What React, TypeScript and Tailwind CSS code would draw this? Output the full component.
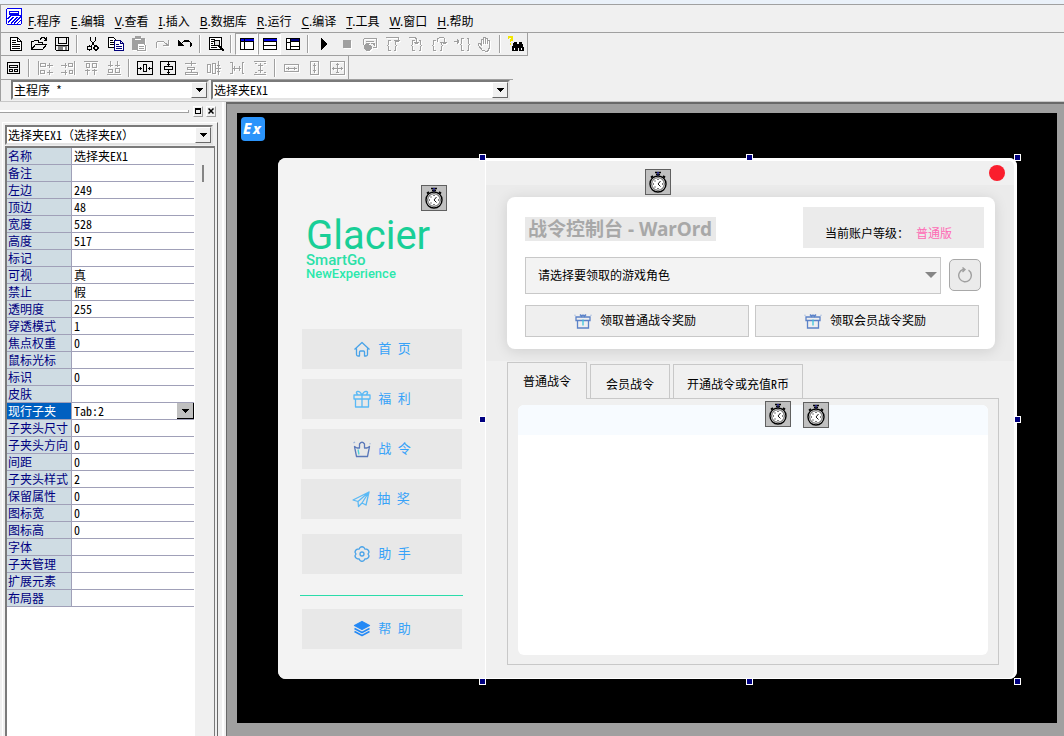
import type { ReactNode } from "react";

const GREY = "#a0a0a0";

function Icon({ children, color = "#000", off = false }: { children: ReactNode; color?: string; off?: boolean }) {
  return (
    <svg
      viewBox="0 0 16 16"
      fill="none"
      stroke={off ? GREY : color}
      shapeRendering="crispEdges"
      className={off ? "h-4 w-4 drop-shadow-[1px_1px_0_#fff]" : "h-4 w-4"}
      aria-hidden="true"
    >
      {children}
    </svg>
  );
}

function Tool({ label, pressed = false, children }: { label: string; pressed?: boolean; children: ReactNode }) {
  return (
    <button
      type="button"
      aria-label={label}
      className={
        pressed
          ? "flex h-[22px] w-[23px] items-center justify-center border border-t-[#a0a0a0] border-l-[#a0a0a0] border-r-white border-b-white bg-[#f8f8f8]"
          : "flex h-[22px] w-[23px] items-center justify-center"
      }
    >
      {children}
    </button>
  );
}

function Sep() {
  return (
    <span className="flex h-[18px] w-2 justify-center">
      <span className="w-px bg-[#a0a0a0]" />
      <span className="w-px bg-white" />
    </span>
  );
}

function Drop() {
  return (
    <span className="pointer-events-none absolute top-[2px] right-[2px] bottom-[2px] flex w-4 items-center justify-center border border-t-white border-l-white border-r-[#696969] border-b-[#696969] bg-[#f0f0f0]">
      <svg viewBox="0 0 7 4" className="h-1 w-[7px]" shapeRendering="crispEdges" aria-hidden="true">
        <path d="M0 0h7v1H6v1H5v1H4v1H3V3H2V2H1V1H0z" fill="#000" />
      </svg>
    </span>
  );
}

function Combo({ label, value, width }: { label: string; value: string; width: string }) {
  return (
    <span className={`relative block h-5 ${width}`}>
      <select
        aria-label={label}
        className="block h-full w-full appearance-none border-2 border-t-[#7a7a7a] border-l-[#7a7a7a] border-r-[#e3e3e3] border-b-[#e3e3e3] bg-white pl-px text-[12px] leading-4 text-black outline-none"
      >
        <option>{value}</option>
      </select>
      <Drop />
    </span>
  );
}

function Timer({ place }: { place: string }) {
  return (
    <span className={`absolute z-10 flex h-[26px] w-[26px] items-center justify-center border border-[#606060] bg-[#c0c0c0] ${place}`}>
      <svg viewBox="0 0 20 22" className="h-[22px] w-5" aria-hidden="true">
        <path d="M7 1.5h6M8 3.5h4" stroke="#000" strokeWidth="1.6" />
        <path d="M9 1.5h2M10 2v4" stroke="#23238c" strokeWidth="1" />
        <path d="M3 6.5l2-1.5M17 6.5L15 5" stroke="#000" strokeWidth="2" />
        <circle cx="10" cy="13" r="8" fill="#fff" stroke="#000" strokeWidth="1.4" />
        <circle cx="10" cy="13" r="6.3" fill="#fff" stroke="#000" strokeWidth=".7" />
        <path d="M12.500 10L10 13l2.500 2.500" fill="none" stroke="#000" strokeWidth=".9" />
        <path d="M10 8v1M10 17v1M5 13h1M14 13h1M6.5 10h1M6.5 16h1" stroke="#000" strokeWidth="1" />
      </svg>
    </span>
  );
}

const menus = [
  ["F", "程序"], ["E", "编辑"], ["V", "查看"], ["I", "插入"], ["B", "数据库"],
  ["R", "运行"], ["C", "编译"], ["T", "工具"], ["W", "窗口"], ["H", "帮助"],
];

const properties = [
  ["名称", "选择夹EX1"], ["备注", ""], ["左边", "249"], ["顶边", "48"], ["宽度", "528"], ["高度", "517"],
  ["标记", ""], ["可视", "真"], ["禁止", "假"], ["透明度", "255"], ["穿透模式", "1"], ["焦点权重", "0"],
  ["鼠标光标", ""], ["标识", "0"], ["皮肤", ""], ["现行子夹", "Tab:2"], ["子夹头尺寸", "0"],
  ["子夹头方向", "0"], ["间距", "0"], ["子夹头样式", "2"], ["保留属性", "0"], ["图标宽", "0"],
  ["图标高", "0"], ["字体", ""], ["子夹管理", ""], ["扩展元素", ""], ["布局器", ""],
];

const handles = [
  "-top-1 -left-[7px]", "-top-1 left-1/2 -ml-[6px]", "-top-1 -right-1",
  "top-1/2 -left-[7px] -mt-[3px]", "top-1/2 -right-1 -mt-[3px]",
  "-bottom-[6px] -left-[7px]", "-bottom-[6px] left-1/2 -ml-[6px]", "-bottom-[6px] -right-1",
];

function MenuBar() {
  return (
    <nav className="flex h-[29px] items-center border-t border-b border-[#a0a0a0] border-l border-l-[#a0a0a0] pl-[5px] font-['Noto_Sans','Noto_Sans_CJK_SC',sans-serif]">
      <svg viewBox="0 0 17 17" className="mb-1 h-[17px] w-[17px]" fill="none" stroke="#0000f0" shapeRendering="crispEdges" aria-hidden="true">
        <path d="M1 1h14v1h1v14H1z" fill="#fff" stroke="none" />
        <path d="M.5 15.500V1.500l1-1h14v15l-1 1h-13z" />
        <path d="M3.500 3.500h9v3h-9zM3.500 5h9" />
        <path d="M1 11l4-3.500h10v1.500L8 15.500M2 14.500l6.500-6M5 16l6.500-7M11 16l4-4" strokeWidth="1.300" />
      </svg>
      <ul className="flex gap-[10px] pt-[7px] pl-[5px] text-[12px] leading-4 text-black">
        {menus.map(([key, text]) => (
          <li key={key}>
            <button type="button" className="whitespace-nowrap"><span className="underline underline-offset-2">{key}</span>.{text}</button>
          </li>
        ))}
      </ul>
    </nav>
  );
}

function StandardBar() {
  return (
    <div className="flex h-[23px] w-max items-center border-r border-b border-l border-[#a0a0a0] pl-[3px]">
      <Tool label="新建"><Icon><path d="M2.500 1.500h7l4 4v9h-11zM9.500 1.500v4h4" fill="#fff" /><path d="M4 4.500h4M4 6.500h4M4 8.500h8M4 10.500h8M4 12.500h8" /></Icon></Tool>
      <Tool label="打开"><Icon><path d="M.5 13.500v-8h2l1-1h4v2h4v2M.5 13.500l4-5h11l-4 5zM9 3.500l2-2h2l2 2M15.500 1v4M12.500 4.500h3" /></Icon></Tool>
      <Tool label="保存"><Icon><path d="M1.500 1.500h13v13h-12l-1-1zM4.500 1.500v6h8v-6" fill="#f0f0f0" /><path d="M4 9h9v5H4z" fill="#808080" stroke="none" /><path d="M9 11h2v3H9z" fill="#fff" stroke="none" /><path d="M2 9.500h12" /></Icon></Tool>
      <Sep />
      <Tool label="剪切"><Icon><path d="M5.500 1v3l5 7M10.500 1v3l-5 7" /><circle cx="4.500" cy="12" r="2" strokeWidth="1.200" /><circle cx="11" cy="12" r="2" strokeWidth="1.200" /></Icon></Tool>
      <Tool label="复制"><Icon><path d="M.5 1.500h5l3 3v7h-8z" fill="#fff" /><path d="M2 4.500h3M2 6.500h5M2 8.500h5" /><path d="M6.500 4.500h6l3 3v7h-9zM12.500 4.500v3h3M8 8.500h3M8 10.500h6M8 12.500h6" fill="#fff" stroke="#00007a" /></Icon></Tool>
      <Tool label="粘贴"><Icon off><path d="M1 2h12v11H1zM4 0h5v3H4z" fill={GREY} /><path d="M4 3.500h6" stroke="#fff" /><path d="M6.500 7.500h6l2 2v5h-8z" fill="#fff" /><path d="M8 10.500h5M8 12.500h5" /></Icon></Tool>
      <Tool label="重做"><Icon off><path d="M3 11.500l-1-1.500V7l2-2h5l4 3.500" /><path d="M14.500 4v5.500H9M12 9h3M13 8h2" /></Icon></Tool>
      <Tool label="撤销"><Icon><path d="M12.500 11.500l1.500-1.500V7l-2-2H7L3.500 8.500" strokeWidth="1.200" /><path d="M1.500 4.500v5h5zM2 7l3 3" fill="#000" /></Icon></Tool>
      <Sep />
      <Tool label="查找"><Icon><path d="M1.500 1.500h12v12h-12z" fill="#fff" /><path d="M3 3.500h4M3 5.500h3M3 7.500h2M3 9.500h3M3 11.500h6" /><circle cx="9" cy="7" r="3" fill="#ddd" /><path d="M11 9l4 5M11 10l4 5" strokeWidth="1.500" /></Icon></Tool>
      <Sep />
      <Tool label="工作夹" pressed><Icon><path d="M1.500 2.500h13v11h-13z" fill="#fff" /><path d="M2 4h13" stroke="#0000e0" strokeWidth="2" /><path d="M1.500 5.500h13M5.500 2v12" /></Icon></Tool>
      <Tool label="输出夹" pressed><Icon><path d="M1.500 2.500h13v11h-13z" fill="#fff" /><path d="M2 4h13" stroke="#0000e0" strokeWidth="2" /><path d="M1.500 5.500h13M1.500 9.500h13" /></Icon></Tool>
      <Tool label="属性夹"><Icon><path d="M1.500 2.500h13v11h-13z" fill="#fff" /><path d="M6 4h8" stroke="#000080" strokeWidth="1.500" /><path d="M5.500 5.500h9M5.500 2v12M1.500 6.500h4M5.500 10.500h9" /></Icon></Tool>
      <Sep />
      <Tool label="运行"><Icon><path d="M5 2h1v1h1v1h1v1h1v1h1v1h1v2h-1v1H9v1H8v1H7v1H6v1H5z" fill="#000" stroke="none" /></Icon></Tool>
      <Tool label="停止"><Icon off><path d="M4 4h8v8H4z" fill={GREY} stroke="none" /></Icon></Tool>
      <Tool label="查看"><Icon off><path d="M1.500 2.500h13v9h-4M1.500 2.500v6M4 5.500h8M4 7.500h4" /><path d="M2 10l3-2 4 2v3l-3 2-4-3zM9 7h3v3" fill={GREY} /></Icon></Tool>
      <Tool label="单步"><Icon off><path d="M5.500 4.500h-2v4l-1 1 1 1v4h2M8.500 4.500h2v4l1 1-1 1v4h-2M1 1.500h12v4M10 4.500h5M11 5.500h3" /></Icon></Tool>
      <Tool label="进入"><Icon off><path d="M6.500 4.500h-2v4l-1 1 1 1v4h2M10.500 4.500h2v4l1 1-1 1v4h-2M1 1.500h6l1 1v5M6 6.500h5M7 7.500h3" /></Icon></Tool>
      <Tool label="跳出"><Icon off><path d="M4.500 4.500h-2v4l-1 1 1 1v4h2M8.500 6.500h2v2l1 1-1 1v4h-2M6.500 6V3l2-1.500h4l1 1v5M11 6.500h5M12 7.500h3" /></Icon></Tool>
      <Tool label="到光标"><Icon off><path d="M9.500 2.500h-2v5l-1 1 1 1v5h2M12.500 2.500h2v5l1 1-1 1v5h-2M0 5.500h5M3.500 3v5M4.500 4v3" /></Icon></Tool>
      <Tool label="断点"><Icon off><path d="M5.500 14.500l-4-5v-2h2l1 2v-6h2v4-6h2v6-5h2v5-3h2v7l-2 4z" /></Icon></Tool>
      <Sep />
      <Tool label="搜索帮助"><Icon><path d="M0 2.500V1h4v3H2.500v2M2.500 7v2" stroke="#f2e600" strokeWidth="1.600" /><path d="M6 6h3v2h2V6h3l2 6v3h-5v-3h-1v3H4v-3z" fill="#000" stroke="none" /><path d="M6 12h1v2H6zM13 12h1v2h-1z" fill="#fff" stroke="none" /></Icon></Tool>
    </div>
  );
}

function AlignBar() {
  return (
    <div className="flex h-6 w-[513px] border-b border-l border-[#a0a0a0]">
      <div className="flex w-max items-center border-r border-[#a0a0a0] pl-px">
        <Tool label="窗体"><Icon><path d="M1.500 2.500h12v11h-12zM3.500 5.500h8v2h-8zM3.500 9.500h3v2h-3zM8.500 9.500h3v2h-3z" strokeWidth="1.300" /></Icon></Tool>
        <Sep />
        <Tool label="左对齐"><Icon off><path d="M1.500 1v14M3.500 3.500h5v3h-5zM3.500 10.500h4v3h-4zM10 5.500h6M12.500 3v5M10 12.500h6M12.500 10v5" /></Icon></Tool>
        <Tool label="右对齐"><Icon off><path d="M14.500 1v14M8.500 3.500h4v3h-4zM9.500 10.500h3v3h-3zM1 5.500h6M5.500 3v5M1 12.500h6M5.500 10v5" /></Icon></Tool>
        <Tool label="上对齐"><Icon off><path d="M1 1.500h14M3.500 3.500h3v4h-3zM9.500 3.500h4v4h-4zM4.500 9v6M2 10.500h5M11.500 9v6M9 10.500h5" /></Icon></Tool>
        <Tool label="下对齐"><Icon off><path d="M1 14.500h14M2.500 9.500h4v3h-4zM9.500 8.500h4v4h-4zM4.500 1v6M2 5.500h5M11.500 1v6M9 5.500h5" /></Icon></Tool>
        <Sep />
        <Tool label="水平居中"><Icon><path d="M.5 1.500h15v13H.5z" /><path d="M6.500 4.500h3v7h-3zM1 8.500h4M11 8.500h4M3.500 7v3M12.500 7v3" /></Icon></Tool>
        <Tool label="垂直居中"><Icon><path d="M.5 1.500h15v13H.5z" /><path d="M4.500 6.500h8v3h-8zM8.500 2v4M8.500 10v4M7 4.500h3M7 12.500h3" /></Icon></Tool>
        <Tool label="横向居中"><Icon off><path d="M2 3.500h11M4.500 7.500h7v2h-7zM2.500 12.500h12v2h-12zM8.500 1v5M8.500 10v2" /></Icon></Tool>
        <Tool label="纵向居中"><Icon off><path d="M1.500 4.500h3v8h-3zM6.500 3.500h3v10h-3zM12.500 1v14M10 8.500h5M11 5.500h3M11 11.500h3" /></Icon></Tool>
        <Tool label="水平等距"><Icon off><path d="M1 2.500h2v11H1M15 2.500h-2v11h2M4 8.500h8M5.500 6v5M10.500 6v5" /></Icon></Tool>
        <Tool label="垂直等距"><Icon off><path d="M2 1.500h12M2 14.500h12M8.500 3v10M6 5.500h5M6 10.500h5M3 3.500h2M12 3.500h2M3 12.500h2M12 12.500h2" /></Icon></Tool>
        <Sep />
        <Tool label="等宽"><Icon off><path d="M1.500 4.500h14v7h-14zM3 8.500h11M5.500 7v3M11.500 7v3" /></Icon></Tool>
        <Tool label="等高"><Icon off><path d="M4.500 1.500h8v13h-8zM8.500 3v10M7 5.500h3M7 10.500h3" /></Icon></Tool>
        <Tool label="等大小"><Icon off><path d="M1.500 1.500h14v13h-14zM3 8.500h11M8.500 3v10M4.500 7v3M12.500 7v3M7 4.500h3M7 12.500h3" /></Icon></Tool>
      </div>
    </div>
  );
}

function PropertyPanel() {
  return (
    <aside className="flex w-[224px] shrink-0 flex-col border-r-2 border-white">
      <div className="flex h-5 items-center gap-[3px] pb-[2px]">
        <span className="mr-px h-[3px] w-[189px] border-r border-b border-[#a0a0a0] bg-white" />
        <button type="button" aria-label="还原" className="flex h-[11px] w-[10px] items-center justify-center border border-t-white border-l-white border-r-[#a0a0a0] border-b-[#a0a0a0]">
          <svg viewBox="0 0 6 6" className="h-[6px] w-[6px]" shapeRendering="crispEdges" aria-hidden="true"><path d="M0 0h6v6H0zM1 2v3h4V2z" fillRule="evenodd" /></svg>
        </button>
        <button type="button" aria-label="关闭" className="flex h-[11px] w-[10px] items-center justify-center border border-t-white border-l-white border-r-[#a0a0a0] border-b-[#a0a0a0]">
          <svg viewBox="0 0 6 6" className="h-[6px] w-[6px]" aria-hidden="true"><path d="M.5.5l5 5M5.500.5l-5 5" stroke="#000" strokeWidth="1.500" /></svg>
        </button>
      </div>
      <div className="mr-1 ml-[2px] flex flex-1 flex-col border-t border-r border-t-white border-r-[#696969] border-l border-l-white pt-[2px] pl-[2px]">
        <Combo label="对象" value="选择夹EX1（选择夹EX）" width="w-[208px]" />
        <div className="mt-px mr-[2px] flex flex-1 border-t-2 border-r border-l-2 border-[#7a7a7a] bg-white">
          <table className="w-[187px] table-fixed self-start border-separate border-spacing-0 text-left text-[12px] leading-4">
            <colgroup><col className="w-[65px]" /><col /></colgroup>
            <tbody>
              {properties.map(([name, value]) => {
                const active = name === "现行子夹";
                return (
                  <tr key={name} className="h-[17px]">
                    <th
                      scope="row"
                      className={
                        active
                          ? "border-r border-b border-[#a0a0b8] bg-[#0060c0] p-0 pl-px font-normal whitespace-nowrap text-white"
                          : "border-r border-b border-[#a0a0b8] bg-[#cfdce3] p-0 pl-px font-normal whitespace-nowrap text-[#000080]"
                      }
                    >
                      {name}
                    </th>
                    <td className="border-b border-[#a0a0b8] p-0 pl-[2px] text-black">
                      {active ? (
                        <span className="relative block h-4">
                          <select aria-label={name} className="block h-4 w-full appearance-none bg-white text-[12px] leading-4 outline-none">
                            <option>{value}</option>
                          </select>
                          <span className="pointer-events-none absolute top-0 right-0 flex h-4 w-[17px] items-center justify-center border-r border-b border-black bg-[#c0c0c0]">
                            <svg viewBox="0 0 7 4" className="h-1 w-[7px]" shapeRendering="crispEdges" aria-hidden="true"><path d="M0 0h7v1H6v1H5v1H4v1H3V3H2V2H1V1H0z" /></svg>
                          </span>
                        </span>
                      ) : (
                        value
                      )}
                    </td>
                  </tr>
                );
              })}
            </tbody>
          </table>
          <div className="ml-px flex flex-1 items-start justify-center bg-[#f0f0f0] pt-[17px]">
            <span className="mr-[3px] h-[17px] w-[2px] bg-[#858585]" />
          </div>
        </div>
      </div>
    </aside>
  );
}

function NavButton({ text, gap, children }: { text: string; gap: string; children: ReactNode }) {
  return (
    <button type="button" className={`flex h-10 w-40 items-center justify-center gap-[7px] bg-[#e8e8e8] text-[13px] leading-5 text-[#37a2f8] ${gap}`}>
      <svg viewBox="0 0 18 18" className="h-[18px] w-[18px]" fill="none" stroke="#49a3e8" strokeWidth="1.300" strokeLinejoin="round" aria-hidden="true">
        {children}
      </svg>
      <span className="pb-[3px] whitespace-pre">{text}</span>
    </button>
  );
}

function Gift() {
  return (
    <svg viewBox="0 0 18 16" className="h-4 w-[18px]" fill="none" stroke="#5b82c8" strokeWidth="1.300" aria-hidden="true">
      <path d="M2 4h14v3.500H2zM3.500 7.500h11v7.500h-11z" />
      <path d="M8 4L6 1.500M10 4l2-2.500M6.500 3q2.500-1.500 5 0" />
      <path d="M9 6.500v6" stroke="#3cc8dc" />
      <path d="M.5 2l1 .5M17.500 2l-1 .5" stroke="#9ab4dc" />
    </svg>
  );
}

function Sidebar() {
  return (
    <div className="relative flex w-[207px] shrink-0 flex-col rounded-l-lg bg-[#f3f3f3] pb-[30px] pl-6">
      <Timer place="top-[27px] left-[143px]" />
      <header className="h-[171px] pt-[61px] pl-1 font-['Roboto',sans-serif]">
        <h1 className="text-[40px] leading-[34px] text-[#19cf97]">Glacier</h1>
        <p className="text-[15px] leading-[14px] font-medium text-[#2be0a8]">SmartGo</p>
        <p className="text-[13px] leading-[14px] font-medium text-[#2be8ac]">NewExperience</p>
      </header>
      <NavButton text="首 页" gap=""><path d="M1.500 9.500L9 2.500l7.500 7M3.500 8.500v6q0 1.500 1.500 1.500h1.500v-4q0-1 1-1h3q1 0 1 1v4H13q1.500 0 1.500-1.500v-6" /></NavButton>
      <NavButton text="福 利" gap="mt-[10px]"><path d="M1 5h16v4H1zM2.500 9h13v8h-13zM9 5v12M9 5Q7 1 4.500 1.500T5 5M9 5q2-4 4.500-3.500T13 5" stroke="#5ab9f5" /></NavButton>
      <NavButton text="战 令" gap="mt-[10px]"><path d="M1.500 6.500l2 10h11l2-10-2.500 1.500h-2.500V4Q9 .5 6.500 4v4H4z" stroke="#5a78b9" /><path d="M5 9.500l1 5" stroke="#4cd0d8" /><path d="M.5 3l1.500-1M16.500 4l1-.5" stroke="#9ab4dc" /></NavButton>
      <NavButton text="抽 奖" gap="mt-[10px] -ml-px"><path d="M1 10L17 2l-3 13-4-2-3.500 3.500-.5-5zM6 11.500L17 2l-7 11" stroke="#5ab9f5" /></NavButton>
      <NavButton text="助 手" gap="mt-[15px]"><path d="M7 2.500Q9 1 11 2.500l.8 1.500 1.700.2q2.500.8 2.500 3L15 9l1 1.800q0 2.200-2.500 3l-1.700.2-.8 1.500q-2 1.500-4 0L6.200 14l-1.700-.2q-2.500-.8-2.500-3L3 9 2 7.200q0-2.200 2.500-3L6.200 4z" /><circle cx="9" cy="9" r="2" /></NavButton>
      <hr className="mt-[21px] -ml-[2px] w-[163px] border-[#2adcaa]" />
      <NavButton text="帮 助" gap="mt-[13px]"><path d="M9 1.500l7.500 4L9 9.500l-7.500-4z" fill="#2489f5" stroke="#2489f5" /><path d="M1.500 8.500L9 12.500l7.500-4M1.500 11.500L9 15.500l7.500-4" stroke="#2489f5" strokeWidth="1.500" /></NavButton>
    </div>
  );
}

function Console() {
  return (
    <div className="bg-[#ebebeb] px-[21px] pt-3 pr-[19px] pb-3">
      <section className="rounded-lg bg-white pt-[10px] pr-[11px] pb-3 pl-[18px] shadow-[0_2px_14px_rgba(0,0,0,0.12)]">
        <div className="flex items-start justify-between">
          <h2 className="mt-[10px] bg-[#e9e9e9] pr-1 pl-[3px] font-['Noto_Sans','Noto_Sans_CJK_SC',sans-serif] text-[19px] leading-6 font-bold whitespace-nowrap text-[#a8a8a8]">战令控制台 - WarOrd</h2>
          <p className="flex h-[41px] w-[181px] gap-[13px] bg-[#ebebeb] pt-[18px] pl-[22px] text-[12px] leading-4 whitespace-nowrap text-black">
            <span className="w-[78px]">当前账户等级：</span>
            <span className="text-[#ff69b4]">普通版</span>
          </p>
        </div>
        <div className="mt-[9px] flex items-start gap-2 pr-[3px]">
          <span className="relative block h-[37px] flex-1">
            <select aria-label="游戏角色" className="block h-full w-full appearance-none border border-[#c8c8c8] bg-[#f3f3f3] pb-px pl-3 text-[12px] text-black outline-none">
              <option>请选择要领取的游戏角色</option>
            </select>
            <span className="pointer-events-none absolute top-[15px] right-1 h-0 w-0 border-x-[6px] border-t-[6px] border-x-transparent border-t-[#858585]" />
          </span>
          <button type="button" aria-label="刷新" className="mt-[2px] flex h-8 w-8 items-center justify-center rounded-[5px] border border-[#a8a8a8] bg-[#ebebeb]">
            <svg viewBox="0 0 16 16" className="h-4 w-4" fill="none" stroke="#a0a0a0" strokeWidth="1.400" aria-hidden="true">
              <path d="M11.500 3.200A6.300 6.300 0 1 1 6 2.500h1.500M5.500.5l2.500 2-2.500 2.500" />
            </svg>
          </button>
        </div>
        <div className="mt-[11px] flex gap-[6px] pr-[5px]">
          {["领取普通战令奖励", "领取会员战令奖励"].map((text) => (
            <button key={text} type="button" className="flex h-8 flex-1 items-center justify-center gap-2 border border-[#c8c8c8] bg-[#efefef] pr-1 text-[12px] leading-4 whitespace-nowrap text-black">
              <Gift />
              <span className="pb-[2px]">{text}</span>
            </button>
          ))}
        </div>
      </section>
    </div>
  );
}

function Tabs() {
  const idle = "-mb-px h-[35px] border border-[#c8c8c8] bg-[#f0f0f0] pt-1 text-center whitespace-nowrap";
  return (
    <div className="relative flex flex-1 flex-col pt-px pr-[15px] pb-[13px] pl-[21px]">
      <Timer place="top-10 left-[279px]" />
      <Timer place="top-[41px] left-[317px]" />
      <div role="tablist" className="flex items-end gap-[3px] text-[12px] leading-4 text-black">
        <button role="tab" aria-selected="true" type="button" className="z-[1] -mb-px h-[37px] w-20 border border-b-0 border-[#c8c8c8] bg-[#f0f0f0]">普通战令</button>
        <button role="tab" aria-selected="false" type="button" className={`${idle} w-20`}>会员战令</button>
        <button role="tab" aria-selected="false" type="button" className={`${idle} w-[130px]`}>开通战令或充值R币</button>
      </div>
      <div role="tabpanel" className="flex flex-1 border border-[#c8c8c8] pt-[6px] pr-[10px] pb-[9px] pl-[10px]">
        <div className="flex-1 overflow-hidden rounded-md bg-white">
          <div className="h-[30px] bg-[#f7fbff]" />
        </div>
      </div>
    </div>
  );
}

function Designer() {
  return (
    <main className="flex-1 border-t-2 border-l border-[#696969] bg-[#a0a0a0] pt-[9px] pr-[7px] pb-[13px] pl-[10px]">
      <div className="relative h-[610px] bg-black pt-[45px] pr-10 pl-[41px]">
        <svg viewBox="0 0 24 24" className="absolute top-1 left-1 h-6 w-6" role="img" aria-label="Ex">
          <rect width="24" height="24" rx="4" fill="#2b94fb" />
          <text x="2" y="17" fill="#fff" fontFamily="Noto Sans, sans-serif" fontSize="15" fontWeight="800" fontStyle="italic">E</text>
          <text x="12" y="17" fill="#fff" fontFamily="Noto Sans, sans-serif" fontSize="14" fontWeight="800" fontStyle="italic">x</text>
        </svg>
        <div className="flex h-[521px] rounded-lg bg-white">
          <Sidebar />
          <div className="relative ml-px flex flex-1">
            <div className="flex flex-1 flex-col rounded-r-lg border-t-[3px] border-r-[3px] border-b border-white bg-[#f0f0f0]">
              <div className="flex h-6 justify-end pt-1 pr-[9px]">
                <button type="button" aria-label="关闭窗口" className="h-4 w-4 rounded-full bg-[#fa1e2d]" />
              </div>
              <Timer place="top-[11px] left-[159px]" />
              <Console />
              <Tabs />
            </div>
            {handles.map((place) => (
              <span key={place} className={`absolute z-10 h-[7px] w-[7px] border border-white bg-[#000080] ${place}`} />
            ))}
          </div>
        </div>
      </div>
    </main>
  );
}

export default function App() {
  return (
    <div className="flex min-h-screen flex-col bg-[#f0f0f0] font-['Noto_Sans_Mono_CJK_SC','Noto_Sans_CJK_SC',monospace]">
      <div className="h-1 bg-[#eaf1f9]" />
      <MenuBar />
      <StandardBar />
      <AlignBar />
      <div className="flex h-[21px] w-[513px] items-start gap-[2px] border-l border-[#a0a0a0] pl-[10px]">
        <Combo label="程序集" value="主程序 *" width="w-[198px]" />
        <Combo label="组件" value="选择夹EX1" width="w-[299px]" />
      </div>
      <div className="flex flex-1 border-t border-[#c8c8c8]">
        <PropertyPanel />
        <span className="w-[2px]" />
        <Designer />
      </div>
    </div>
  );
}
